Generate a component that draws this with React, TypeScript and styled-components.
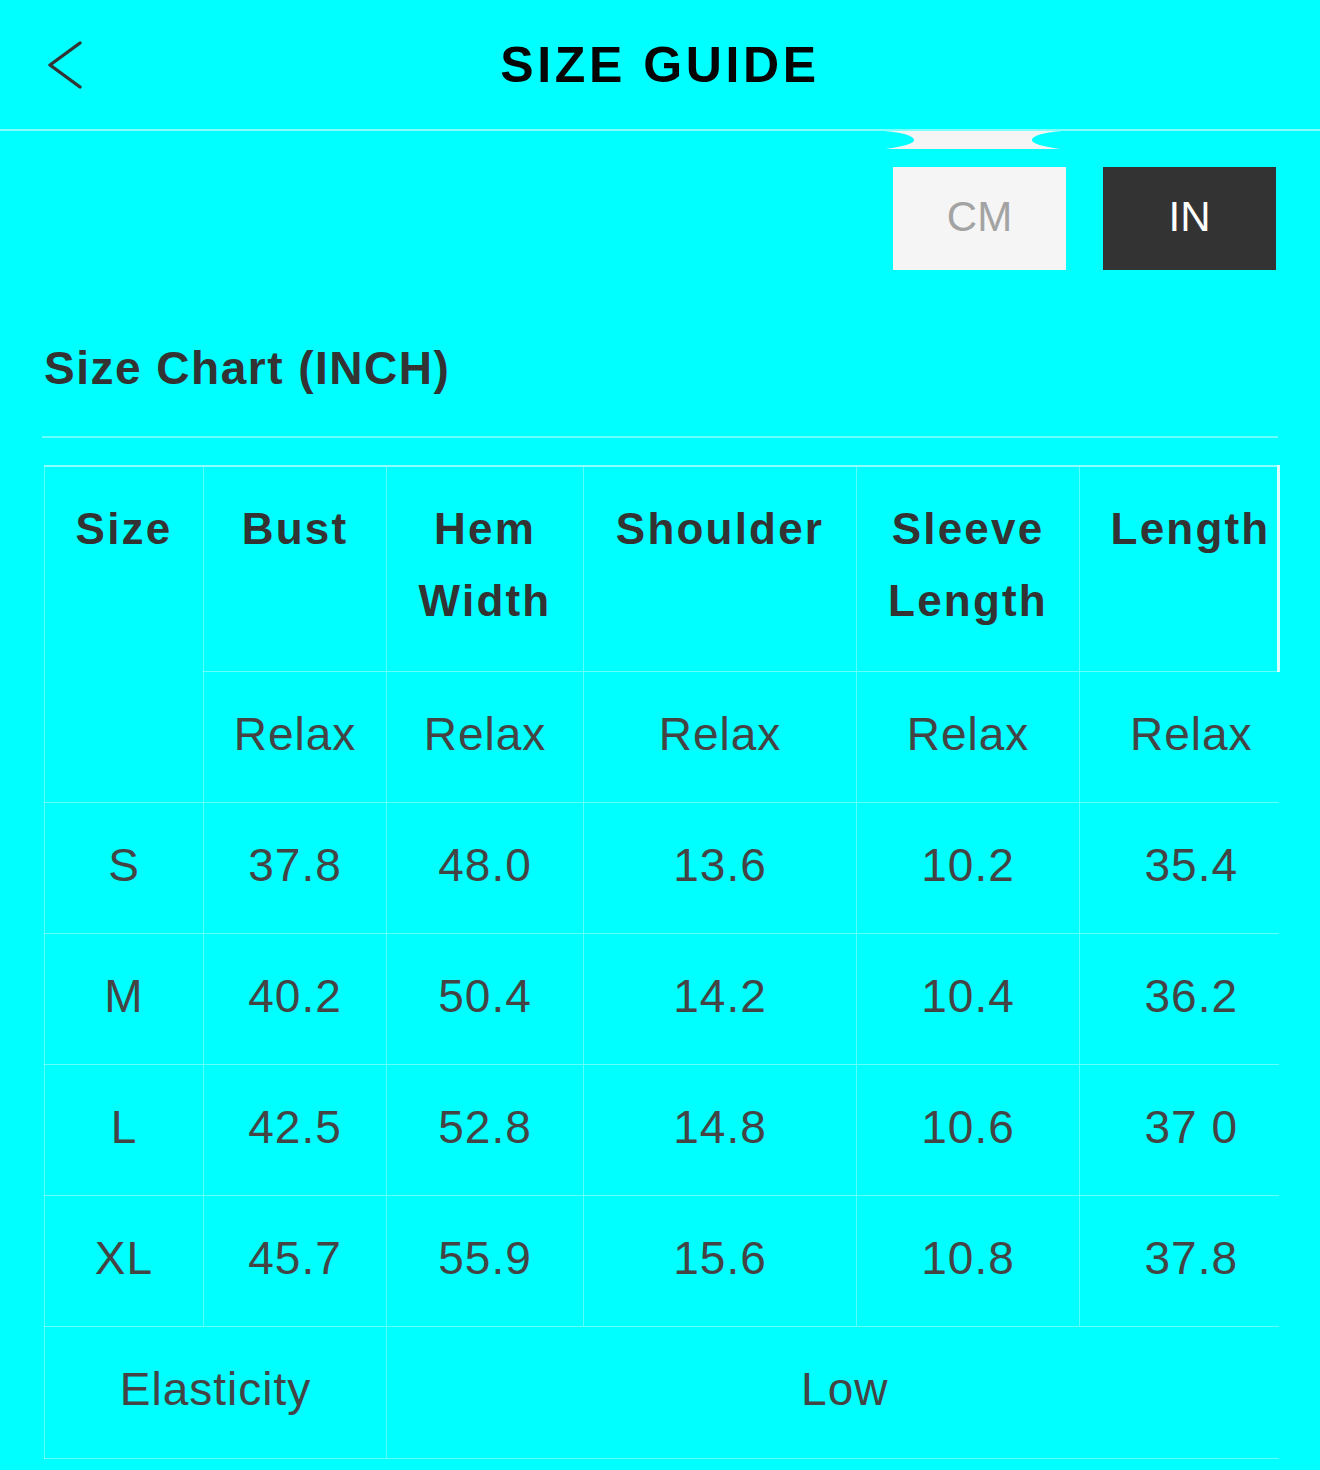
import styled, { createGlobalStyle } from "styled-components";

const GlobalStyle = createGlobalStyle`
  html, body {
    margin: 0;
    padding: 0;
    background: #00ffff;
  }
  body {
    font-family: "Liberation Sans", Arial, sans-serif;
    color: #333;
  }
`;

const Page = styled.div`
  width: 1320px;
  min-height: 1470px;
  background: #00ffff;
  overflow: hidden;
`;

const Header = styled.header`
  height: 129px;
  display: grid;
  grid-template-columns: 1fr auto 1fr;
  align-items: center;
`;

const BackButton = styled.button`
  justify-self: start;
  margin-left: 45px;
  margin-top: 2px;
  padding: 0;
  border: 0;
  background: none;
  display: flex;
  cursor: pointer;
`;

const Title = styled.h1`
  margin: 0;
  font-size: 50px;
  font-weight: 700;
  letter-spacing: 3.6px;
  color: #050505;
  line-height: 1;
`;

const Divider = styled.div`
  height: 2px;
  background: rgba(255, 255, 255, 0.5);
`;

const NotchRow = styled.div`
  display: flex;
  justify-content: flex-end;
  padding-right: 258px;
  height: 18px;
`;

const UnitRow = styled.div`
  display: flex;
  justify-content: flex-end;
  gap: 37px;
  padding-right: 44px;
  margin-top: 18px;
`;

const UnitButton = styled.button<{ $active?: boolean }>`
  width: 173px;
  height: 103px;
  border: 0;
  padding: 0 0 4px;
  font-family: "Liberation Sans", Arial, sans-serif;
  font-size: 42px;
  font-weight: 400;
  background: ${(p) => (p.$active ? "#333333" : "#f5f5f5")};
  color: ${(p) => (p.$active ? "#ffffff" : "#a3a3a3")};
  cursor: pointer;
`;

const SectionTitle = styled.h2`
  margin: 71px 0 0 44px;
  font-size: 46px;
  line-height: 54px;
  font-weight: 700;
  letter-spacing: 1.5px;
  color: #333;
`;

const Rule = styled.div`
  margin: 41px 42px 0 42px;
  height: 2px;
  background: rgba(255, 255, 255, 0.4);
`;

const Table = styled.table`
  margin: 27px 0 0 44px;
  width: 1234px;
  border-collapse: collapse;
  table-layout: fixed;
`;

const HeadCell = styled.th<{ $edge?: boolean }>`
  height: 205px;
  padding: 26px 0 0 ${(p) => (p.$edge ? "24px" : "0")};
  vertical-align: top;
  font-size: 44px;
  line-height: 72px;
  font-weight: 700;
  letter-spacing: 2.2px;
  color: #333;
  text-align: center;
  border-top: 2px solid rgba(255, 255, 255, 0.55);
  border-left: 1px solid rgba(255, 255, 255, 0.35);
  border-bottom: 1px solid rgba(255, 255, 255, 0.4);
  border-right: ${(p) =>
    p.$edge ? "3px solid rgba(255, 255, 255, 0.85)" : "0"};
  box-sizing: border-box;
`;

const Cell = styled.td<{ $tall?: boolean; $shift?: boolean }>`
  height: ${(p) => (p.$tall ? "132px" : "131px")};
  padding: 0 0 6px ${(p) => (p.$shift ? "24px" : "0")};
  font-size: 46px;
  font-weight: 400;
  letter-spacing: 1px;
  color: #444;
  text-align: center;
  vertical-align: middle;
  border-left: 1px solid rgba(255, 255, 255, 0.35);
  border-bottom: 1px solid rgba(255, 255, 255, 0.4);
  box-sizing: border-box;
`;

const ChevronLeft = () => (
  <svg width="40" height="50" viewBox="0 0 40 50" fill="none">
    <path
      d="M35 2 L5 24 L35 46"
      stroke="#333"
      strokeWidth="3.4"
      strokeLinecap="round"
      strokeLinejoin="round"
    />
  </svg>
);

const TabNotch = () => (
  <svg width="178" height="18" viewBox="0 0 178 18">
    <path
      d="M2 18 L176 18 C162 16 148 13 148 9 C148 4 164 1 178 0 L0 0 C14 1 30 4 30 9 C30 13 16 16 2 18 Z"
      fill="#f5f5f5"
    />
  </svg>
);

const columns = ["Size", "Bust", "Hem Width", "Shoulder", "Sleeve Length", "Length"];
const widths = [159, 183, 197, 273, 223, 199];

const rows = [
  ["S", "37.8", "48.0", "13.6", "10.2", "35.4"],
  ["M", "40.2", "50.4", "14.2", "10.4", "36.2"],
  ["L", "42.5", "52.8", "14.8", "10.6", "37 0"],
  ["XL", "45.7", "55.9", "15.6", "10.8", "37.8"],
];

const headLabel = (name: string) => {
  if (name === "Hem Width")
    return (
      <>
        Hem
        <br />
        Width
      </>
    );
  if (name === "Sleeve Length")
    return (
      <>
        Sleeve
        <br />
        Length
      </>
    );
  return name;
};

const App = () => {
  const last = columns.length - 1;
  return (
    <Page>
      <GlobalStyle />
      <Header>
        <BackButton aria-label="back">
          <ChevronLeft />
        </BackButton>
        <Title>SIZE GUIDE</Title>
        <span />
      </Header>
      <Divider />
      <NotchRow>
        <TabNotch />
      </NotchRow>
      <UnitRow>
        <UnitButton>CM</UnitButton>
        <UnitButton $active>IN</UnitButton>
      </UnitRow>

      <SectionTitle>Size Chart (INCH)</SectionTitle>
      <Rule />

      <Table>
        <colgroup>
          {widths.map((w, i) => (
            <col key={i} style={{ width: w }} />
          ))}
        </colgroup>
        <thead>
          <tr>
            {columns.map((c, i) => (
              <HeadCell key={c} rowSpan={i === 0 ? 2 : 1} $edge={i === last}>
                {headLabel(c)}
              </HeadCell>
            ))}
          </tr>
          <tr>
            {columns.slice(1).map((c, i) => (
              <Cell key={c} $shift={i + 1 === last}>
                Relax
              </Cell>
            ))}
          </tr>
        </thead>
        <tbody>
          {rows.map((r) => (
            <tr key={r[0]}>
              {r.map((v, i) => (
                <Cell key={i} $shift={i === last}>
                  {v}
                </Cell>
              ))}
            </tr>
          ))}
          <tr>
            <Cell $tall colSpan={2}>
              Elasticity
            </Cell>
            <Cell $tall $shift colSpan={4}>
              Low
            </Cell>
          </tr>
        </tbody>
      </Table>
    </Page>
  );
};

export default App;
